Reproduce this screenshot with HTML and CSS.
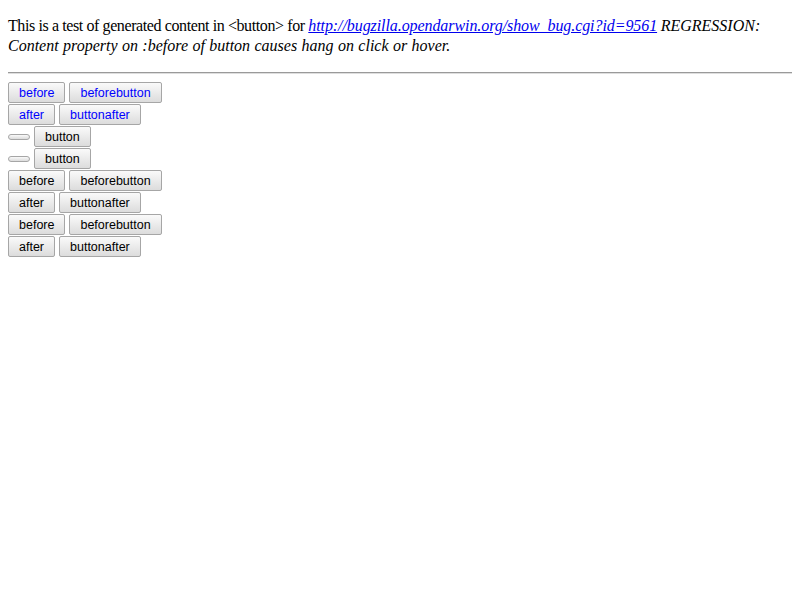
FILE: index.html
```html
<!DOCTYPE html>
<html>
<head>
<meta charset="utf-8">
<link rel="stylesheet" href="styles.css">
</head>
<body>
<p class="intro">This is a test of generated content in &lt;button&gt; for <a class="link" href="#"><i>http://bugzilla.opendarwin.org/show_bug.cgi?id=9561</i></a> <i class="em">REGRESSION: Content property on :before of button causes hang on click or hover.</i></p>
<hr class="rule">
<div class="rows">
  <div class="row"><button class="btn blue">before</button><button class="btn blue">beforebutton</button></div>
  <div class="row"><button class="btn blue">after</button><button class="btn blue">buttonafter</button></div>
  <div class="row"><button class="btn empty"></button><button class="btn">button</button></div>
  <div class="row"><button class="btn empty"></button><button class="btn">button</button></div>
  <div class="row"><button class="btn">before</button><button class="btn">beforebutton</button></div>
  <div class="row"><button class="btn">after</button><button class="btn">buttonafter</button></div>
  <div class="row"><button class="btn">before</button><button class="btn">beforebutton</button></div>
  <div class="row"><button class="btn">after</button><button class="btn">buttonafter</button></div>
</div>
</body>
</html>
```
FILE: styles.css
```css
html {
  margin: 0;
  padding: 0;
}
body {
  margin: 0;
  padding: 8px;
  font-family: "Liberation Serif", "Times New Roman", serif;
  font-size: 16px;
  color: #000;
  background: #fff;
}
.intro {
  margin: 8px 0 16px;
  line-height: 20px;
  letter-spacing: -0.4px;
}
.intro i {
  letter-spacing: 0;
}
.link i {
  letter-spacing: -0.08px;
}
.em {
  word-spacing: 0.4px;
}
.link {
  color: #0000ee;
  text-decoration: underline;
}
.rule {
  margin: 0 0 8px;
  height: 0;
  border: 0;
  border-top: 1px solid #9a9a9a;
  border-bottom: 1px solid #dedede;
}
.rows {
  display: flex;
  flex-direction: column;
}
.row {
  display: flex;
  align-items: flex-start;
  gap: 4px;
  height: 22px;
}
.btn {
  box-sizing: border-box;
  height: 21px;
  margin: 0;
  padding: 0 10px;
  font-family: "Liberation Sans", Arial, sans-serif;
  font-size: 12.5px;
  color: #000;
  border: 1px solid #a6a6a6;
  border-radius: 2px;
  background: linear-gradient(#fafafa, #dcdcdc);
}
.btn.blue {
  color: #0000ff;
}
.btn.empty {
  align-self: center;
  width: 22px;
  height: 6px;
  padding: 0;
  border-radius: 3px;
}
```
